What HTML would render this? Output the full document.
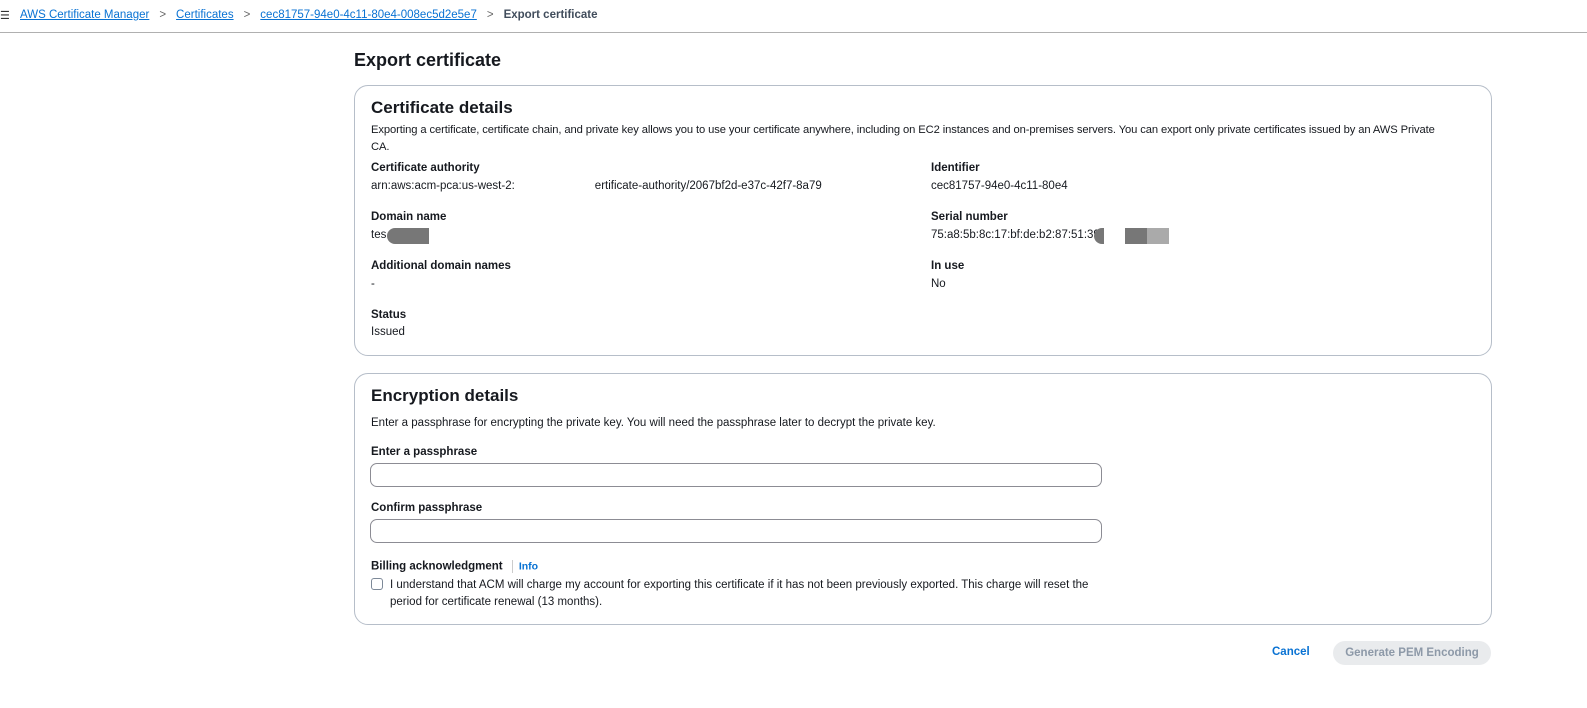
<!DOCTYPE html>
<html><head><meta charset="utf-8"><style>
*{box-sizing:border-box;margin:0;padding:0}
body{width:1587px;height:708px;background:#fff;font-family:"Liberation Sans",sans-serif;color:#16191f;font-size:11.5px;position:relative;overflow:hidden}
.a{position:absolute;white-space:nowrap}
.bc a{color:#0972d3;text-decoration:underline}
.lbl{font-weight:bold;font-size:11.5px}
.card{position:absolute;left:354px;width:1138px;border:1px solid #b6bec9;border-radius:14px}
h2{font-size:17px;font-weight:bold}
.inp{position:absolute;left:370px;width:732px;height:24px;border:1px solid #8c8c94;border-radius:7px}
.blur{position:absolute;background:#777}
</style></head><body>
<div class="a" style="left:0;top:9px;font-size:11px;color:#333">☰</div>
<div class="a bc" style="left:20px;top:9px;font-size:11.5px"><a>AWS Certificate Manager</a><span style="color:#666;margin:0 10px">&gt;</span><a>Certificates</a><span style="color:#666;margin:0 10px">&gt;</span><a>cec81757-94e0-4c11-80e4-008ec5d2e5e7</a><span style="color:#666;margin:0 10px">&gt;</span><b style="color:#414d5c">Export certificate</b></div>
<div class="a" style="left:0;top:32px;width:1587px;height:1px;background:#b0b0b0"></div>
<div class="a" style="left:354px;top:50px;font-size:18px;font-weight:bold">Export certificate</div>

<div class="card" style="top:85px;height:271px"></div>
<div class="a" style="left:371px;top:98px"><h2>Certificate details</h2></div>
<div class="a" style="left:371px;top:122px;white-space:normal;width:1085px;line-height:17px;font-size:11.2px;letter-spacing:-0.1px">Exporting a certificate, certificate chain, and private key allows you to use your certificate anywhere, including on EC2 instances and on-premises servers. You can export only private certificates issued by an AWS Private CA.</div>
<div class="a lbl" style="left:371px;top:162px">Certificate authority</div>
<div class="a" style="left:371px;top:180px">arn:aws:acm-pca:us-west-2:<span style="display:inline-block;width:80px"></span>ertificate-authority/2067bf2d-e37c-42f7-8a79</div>
<div class="a lbl" style="left:931px;top:162px">Identifier</div>
<div class="a" style="left:931px;top:180px">cec81757-94e0-4c11-80e4</div>
<div class="a lbl" style="left:371px;top:211px">Domain name</div>
<div class="a" style="left:371px;top:229px">tes</div>
<div class="blur" style="left:387px;top:228px;width:42px;height:16px;border-radius:8px 0 0 8px"></div>
<div class="a lbl" style="left:931px;top:211px">Serial number</div>
<div class="a" style="left:931px;top:229px">75:a8:5b:8c:17:bf:de:b2:87:51:39</div>
<div class="blur" style="left:1094px;top:228px;width:10px;height:16px;border-radius:8px 0 0 8px"></div>
<div class="blur" style="left:1125px;top:228px;width:22px;height:16px"></div>
<div class="blur" style="left:1147px;top:228px;width:22px;height:16px;background:#aaa"></div>
<div class="a lbl" style="left:371px;top:260px">Additional domain names</div>
<div class="a" style="left:371px;top:278px">-</div>
<div class="a lbl" style="left:931px;top:260px">In use</div>
<div class="a" style="left:931px;top:278px">No</div>
<div class="a lbl" style="left:371px;top:309px">Status</div>
<div class="a" style="left:371px;top:326px">Issued</div>

<div class="card" style="top:373px;height:252px"></div>
<div class="a" style="left:371px;top:386px"><h2>Encryption details</h2></div>
<div class="a" style="left:371px;top:417px">Enter a passphrase for encrypting the private key. You will need the passphrase later to decrypt the private key.</div>
<div class="a lbl" style="left:371px;top:446px">Enter a passphrase</div>
<div class="inp" style="top:463px"></div>
<div class="a lbl" style="left:371px;top:502px">Confirm passphrase</div>
<div class="inp" style="top:519px"></div>
<div class="a lbl" style="left:371px;top:560px">Billing acknowledgment <span style="display:inline-block;width:1px;height:13px;background:#ccc;margin:0 6px;vertical-align:middle"></span><span style="color:#0972d3;font-size:10.5px">Info</span></div>
<div class="a" style="left:371px;top:578px;width:12px;height:12px;border:1px solid #7d8998;border-radius:3px"></div>
<div class="a" style="left:390px;top:577px;white-space:normal;width:710px;line-height:17px">I understand that ACM will charge my account for exporting this certificate if it has not been previously exported. This charge will reset the period for certificate renewal (13 months).</div>

<div class="a" style="left:1272px;top:646px;color:#0972d3;font-weight:bold">Cancel</div>
<div class="a" style="left:1333px;top:641px;width:158px;height:24px;background:#e9ebed;border-radius:12px;color:#8d99a8;font-weight:bold;text-align:center;line-height:24px">Generate PEM Encoding</div>
</body></html>
